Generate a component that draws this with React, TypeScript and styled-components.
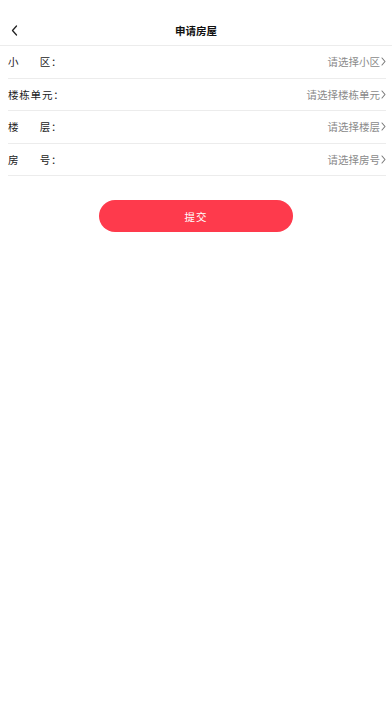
import React from 'react';
import styled, { createGlobalStyle } from 'styled-components';

const GlobalStyle = createGlobalStyle`
  html, body {
    margin: 0;
    padding: 0;
    background: #ffffff;
  }
  body {
    font-family: "Noto Sans CJK SC", "Noto Sans", sans-serif;
  }
`;

const Page = styled.div`
  width: 100%;
  min-height: 701px;
  background: #ffffff;
`;

const Header = styled.div`
  height: 46px;
  padding-top: 14px;
  box-sizing: border-box;
  display: flex;
  align-items: center;
  justify-content: center;
  position: relative;
  border-bottom: 1px solid #ececec;
`;

const BackButton = styled.div`
  position: absolute;
  left: 8px;
  top: 22px;
  width: 12px;
  height: 16px;
  display: flex;
  align-items: center;
  justify-content: center;
`;

const Title = styled.h1`
  margin: 0;
  font-size: 10.5px;
  font-weight: 700;
  color: #111;
  line-height: 16px;
  margin-top: 2px;
`;

const Form = styled.div`
  padding: 0 6px 0 8px;
`;

const Row = styled.div`
  height: 32.5px;
  display: flex;
  align-items: center;
  justify-content: space-between;
  border-bottom: 1px solid #ececec;
  box-sizing: border-box;
`;

const Label = styled.div`
  display: flex;
  align-items: center;
  font-size: 10.5px;
  color: #222;
  letter-spacing: 0.8px;
`;

const Spread = styled.span`
  display: flex;
  justify-content: space-between;
  width: 43px;
`;

const Picker = styled.div`
  display: flex;
  align-items: center;
  font-size: 10.5px;
  color: #8a8a8a;
  gap: 1px;
`;

const SubmitWrap = styled.div`
  display: flex;
  justify-content: center;
  padding-top: 24px;
`;

const SubmitButton = styled.button`
  width: 194px;
  height: 32px;
  border: none;
  border-radius: 16px;
  background: #fe3a4c;
  color: #ffffff;
  font-family: inherit;
  font-size: 10.5px;
  letter-spacing: 1px;
`;

const Chevron = ({ color = '#7a7a7a' }: { color?: string }) => (
  <svg width="5" height="9" viewBox="0 0 5 9" fill="none">
    <path d="M1 1l3 3.5-3 3.5" stroke={color} strokeWidth="1.1" strokeLinecap="round" strokeLinejoin="round" />
  </svg>
);

const rows = [
  { chars: ['小', '区'], placeholder: '请选择小区' },
  { chars: ['楼栋单元'], placeholder: '请选择楼栋单元' },
  { chars: ['楼', '层'], placeholder: '请选择楼层' },
  { chars: ['房', '号'], placeholder: '请选择房号' },
];

const App = () => {
  return (
    <Page>
      <GlobalStyle />
      <Header>
        <BackButton>
          <svg width="7" height="11" viewBox="0 0 7 11" fill="none">
            <path d="M5.5 1L1.5 5.5l4 4.5" stroke="#222" strokeWidth="1.3" strokeLinecap="round" strokeLinejoin="round" />
          </svg>
        </BackButton>
        <Title>申请房屋</Title>
      </Header>
      <Form>
        {rows.map((r) => (
          <Row key={r.placeholder}>
            <Label>
              {r.chars.length > 1 ? (
                <Spread>
                  {r.chars.map((c) => (
                    <span key={c}>{c}</span>
                  ))}
                </Spread>
              ) : (
                <span>{r.chars[0]}</span>
              )}
              <span>：</span>
            </Label>
            <Picker>
              {r.placeholder}
              <Chevron />
            </Picker>
          </Row>
        ))}
      </Form>
      <SubmitWrap>
        <SubmitButton>提交</SubmitButton>
      </SubmitWrap>
    </Page>
  );
};

export default App;
